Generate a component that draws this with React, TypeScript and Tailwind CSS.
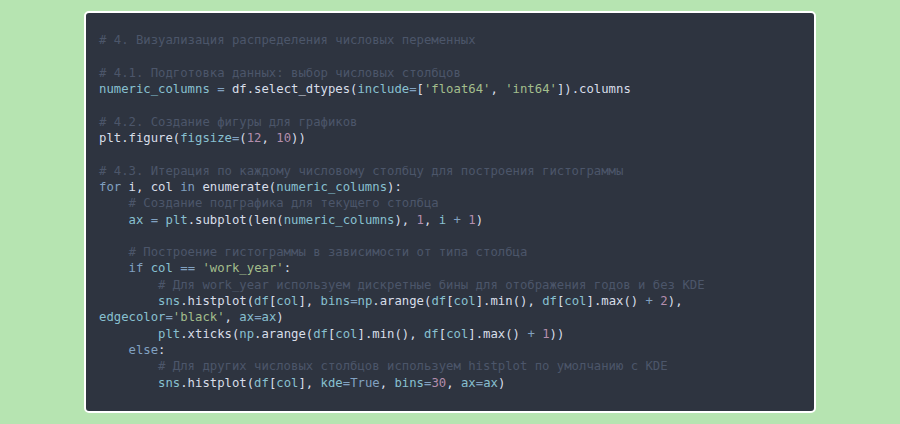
import React from 'react';

type Tok = [string, string];

const colors: Record<string, string> = {
    c: 'text-[#4c566a]',
    t: 'text-[#d8dee9]',
    v: 'text-[#88c0d0]',
    o: 'text-[#81a1c1]',
    s: 'text-[#a3be8c]',
    n: 'text-[#b48ead]',
};

const lines: Tok[][] = [
    [['c', '# 4. Визуализация распределения числовых переменных']],
    [],
    [['c', '# 4.1. Подготовка данных: выбор числовых столбцов']],
    [['v', 'numeric_columns'], ['t', ' '], ['o', '='], ['t', ' df.select_dtypes('], ['v', 'include'], ['o', '='], ['t', '['], ['s', "'float64'"], ['t', ', '], ['s', "'int64'"], ['t', ']).columns']],
    [],
    [['c', '# 4.2. Создание фигуры для графиков']],
    [['t', 'plt.figure('], ['v', 'figsize'], ['o', '='], ['t', '('], ['n', '12'], ['t', ', '], ['n', '10'], ['t', '))']],
    [],
    [['c', '# 4.3. Итерация по каждому числовому столбцу для построения гистограммы']],
    [['o', 'for'], ['t', ' i, col '], ['o', 'in'], ['t', ' enumerate('], ['v', 'numeric_columns'], ['t', '):']],
    [['t', '    '], ['c', '# Создание подграфика для текущего столбца']],
    [['t', '    '], ['v', 'ax'], ['t', ' '], ['o', '='], ['t', ' '], ['v', 'plt'], ['t', '.subplot(len('], ['v', 'numeric_columns'], ['t', '), '], ['n', '1'], ['t', ', '], ['v', 'i'], ['t', ' '], ['o', '+'], ['t', ' '], ['n', '1'], ['t', ')']],
    [],
    [['t', '    '], ['c', '# Построение гистограммы в зависимости от типа столбца']],
    [['t', '    '], ['o', 'if'], ['t', ' '], ['v', 'col'], ['t', ' '], ['o', '=='], ['t', ' '], ['s', "'work_year'"], ['t', ':']],
    [['t', '        '], ['c', '# Для work_year используем дискретные бины для отображения годов и без KDE']],
    [['t', '        '], ['v', 'sns'], ['t', '.histplot('], ['v', 'df'], ['t', '['], ['v', 'col'], ['t', '], '], ['v', 'bins'], ['o', '='], ['v', 'np'], ['t', '.arange('], ['v', 'df'], ['t', '['], ['v', 'col'], ['t', '].min(), '], ['v', 'df'], ['t', '['], ['v', 'col'], ['t', '].max() '], ['o', '+'], ['t', ' '], ['n', '2'], ['t', '), '], ['v', 'edgecolor'], ['o', '='], ['s', "'black'"], ['t', ', '], ['v', 'ax'], ['o', '='], ['v', 'ax'], ['t', ')']],
    [['t', '        '], ['v', 'plt'], ['t', '.xticks('], ['v', 'np'], ['t', '.arange('], ['v', 'df'], ['t', '['], ['v', 'col'], ['t', '].min(), '], ['v', 'df'], ['t', '['], ['v', 'col'], ['t', '].max() '], ['o', '+'], ['t', ' '], ['n', '1'], ['t', '))']],
    [['t', '    '], ['o', 'else'], ['t', ':']],
    [['t', '        '], ['c', '# Для других числовых столбцов используем histplot по умолчанию с KDE']],
    [['t', '        '], ['v', 'sns'], ['t', '.histplot('], ['v', 'df'], ['t', '['], ['v', 'col'], ['t', '], '], ['v', 'kde'], ['o', '='], ['o', 'True'], ['t', ', '], ['v', 'bins'], ['o', '='], ['n', '30'], ['t', ', '], ['v', 'ax'], ['o', '='], ['v', 'ax'], ['t', ')']],
];

const App: React.FC = () => {
    return (
        <div className="h-[424px] w-[900px] bg-[#b6e4b1] flex items-center justify-center">
            <div className="w-[732px] bg-[#2e3440] border-2 border-white rounded-[5px] pt-[19px] pb-[20px] pl-[13px] pr-[13px]">
                <pre className="font-['DejaVu_Sans_Mono',monospace] text-[12.27px] leading-[16.33px] whitespace-pre-wrap text-[#d8dee9]">
                    {lines.map((line, i) => (
                        <div key={i} className="min-h-[16.33px]">
                            {line.map(([k, text], j) => (
                                <span key={j} className={colors[k]}>{text}</span>
                            ))}
                        </div>
                    ))}
                </pre>
            </div>
        </div>
    );
};

export default App;
